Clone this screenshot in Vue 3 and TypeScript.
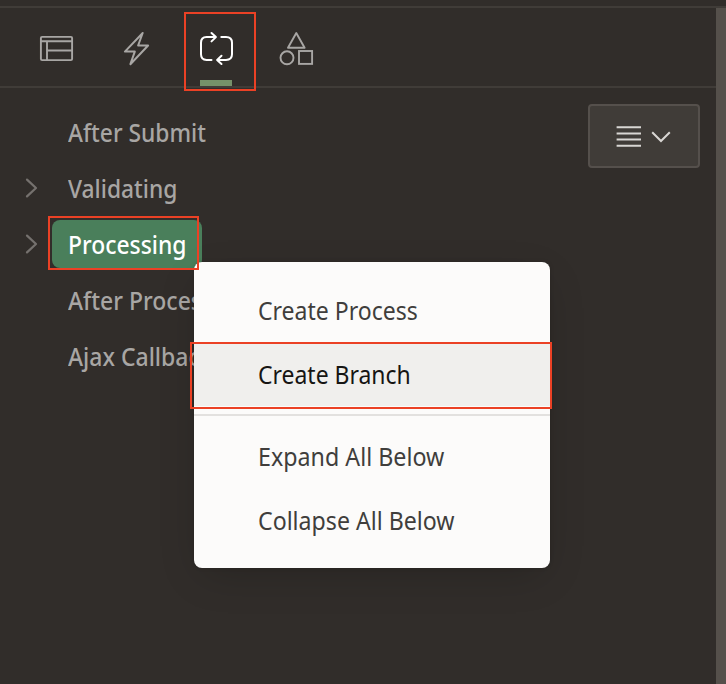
<script setup lang="ts">
interface TreeNode {
  label: string
  expandable: boolean
  selected?: boolean
  scale: number
}

interface MenuEntry {
  label: string
  active?: boolean
  divided?: boolean
  scale: number
}

const nodes: TreeNode[] = [
  { label: 'After Submit', expandable: false, scale: 0.912 },
  { label: 'Validating', expandable: true, scale: 0.912 },
  { label: 'Processing', expandable: true, selected: true, scale: 0.915 },
  { label: 'After Processing', expandable: false, scale: 0.92 },
  { label: 'Ajax Callback', expandable: false, scale: 0.92 },
]

const entries: MenuEntry[] = [
  { label: 'Create Process', scale: 0.921 },
  { label: 'Create Branch', active: true, scale: 0.918 },
  { label: 'Expand All Below', divided: true, scale: 0.93 },
  { label: 'Collapse All Below', scale: 0.926 },
]
</script>

<template>
  <div class="page">
    <div class="top-strip"></div>
    <div class="body">
      <main class="panel">
        <nav class="tabs">
          <button class="tab" aria-label="Rendering">
            <svg width="40" height="40" viewBox="0 0 40 40">
              <g fill="none" stroke="currentColor" stroke-width="1.9">
                <rect x="4.9" y="8.9" width="31.2" height="23.2" rx="1.2" />
                <path d="M5 13.3H36M11 13.3V32M11 22.5H36" />
              </g>
            </svg>
          </button>
          <button class="tab" aria-label="Dynamic Actions">
            <svg width="40" height="40" viewBox="0 0 40 40">
              <path d="M26.7 5L8.9 23.6H18.8L14.4 36.2L32.1 17.5H22.1Z" fill="none" stroke="currentColor" stroke-width="2" stroke-linejoin="round" />
            </svg>
          </button>
          <button class="tab current" aria-label="Processing">
            <svg width="40" height="40" viewBox="0 0 40 40">
              <g fill="none" stroke="currentColor" stroke-width="2" stroke-linecap="round" stroke-linejoin="round">
                <path d="M15.5 31.9H10.5Q5 31.9 5 26.3V14.8Q5 9.1 10.5 9.1H19.7M15.5 5L19.9 9.1L15.5 13.4" />
                <path d="M25.3 9.1H30Q36 9.1 36 14.8V26.3Q36 31.9 30 31.9H21.3M25.5 27.8L21.1 31.9L25.5 36" />
              </g>
            </svg>
          </button>
          <button class="tab" aria-label="Page Shared Components">
            <svg width="40" height="40" viewBox="0 0 40 40">
              <g fill="none" stroke="currentColor" stroke-width="1.9" stroke-linejoin="round">
                <path d="M20.3 5L28.6 19.8H12Z" />
                <circle cx="11" cy="29.8" r="6.5" />
                <rect x="23" y="23" width="13.1" height="12.9" stroke-linejoin="miter" />
              </g>
            </svg>
          </button>
        </nav>
        <div class="content">
          <ul class="tree">
            <li v-for="node in nodes" :key="node.label" class="node">
              <span class="toggle">
                <svg v-if="node.expandable" width="14" height="22" viewBox="0 0 14 22">
                  <path d="M3 2.6L12 11L3 19.4" fill="none" stroke="currentColor" stroke-width="2.2" stroke-linecap="round" stroke-linejoin="round" />
                </svg>
              </span>
              <span class="node-label" :class="{ selected: node.selected }">
                <span class="text" :style="{ transform: `scaleX(${node.scale})` }">{{ node.label }}</span>
              </span>
            </li>
          </ul>
          <button class="list-button" aria-label="View options">
            <svg width="26" height="24" viewBox="0 0 26 24">
              <path d="M.6 2.2H25M.6 8.4H25M.6 14.6H25M.6 20.8H25" fill="none" stroke="currentColor" stroke-width="2" />
            </svg>
            <svg class="chevron" width="20" height="12" viewBox="0 0 20 12">
              <path d="M1.2 1.2L10 10L18.8 1.2" fill="none" stroke="currentColor" stroke-width="2" />
            </svg>
          </button>
        </div>
      </main>
      <div class="splitter"></div>
    </div>

    <div class="menu" role="menu">
      <div v-for="entry in entries" :key="entry.label" class="entry" :class="{ active: entry.active, divided: entry.divided }" role="menuitem">
        <span class="text" :style="{ transform: `scaleX(${entry.scale})` }">{{ entry.label }}</span>
      </div>
    </div>

    <div class="mark mark-tab"></div>
    <div class="mark mark-node"></div>
    <div class="mark mark-entry"></div>
  </div>
</template>

<style>
body {
  margin: 0;
  background: #312d2a;
}
</style>

<style scoped>
.page {
  position: relative;
  display: flex;
  flex-direction: column;
  width: 726px;
  height: 684px;
  overflow: hidden;
  box-sizing: border-box;
  background: #312d2a;
  font-family: "Noto Sans", "Open Sans", sans-serif;
  font-size: 25px;
  color: #a8a6a4;
}
.page * {
  box-sizing: border-box;
}
button {
  margin: 0;
  padding: 0;
  border: 0;
  background: none;
  color: inherit;
  font: inherit;
}
svg {
  display: block;
}
.top-strip {
  height: 8px;
  border-bottom: 2px solid #403c38;
}
.body {
  display: flex;
  flex: 1;
}
.panel {
  flex: 1;
}
.splitter {
  width: 10px;
  background: #55504b;
}
.tabs {
  display: flex;
  height: 80px;
  padding-left: 16px;
  border-bottom: 2px solid #403c38;
}
.tab {
  display: flex;
  flex-direction: column;
  align-items: center;
  width: 80px;
  height: 78px;
  padding-top: 20px;
}
.tab.current {
  color: #fff;
}
.tab.current::after {
  content: "";
  width: 32px;
  height: 6px;
  margin-top: 12px;
  background: #759169;
}
.content {
  display: flex;
  justify-content: space-between;
  align-items: flex-start;
  padding: 16px 16px 0 24px;
}
.tree {
  margin: 0;
  padding: 0;
  list-style: none;
}
.node {
  display: flex;
  align-items: center;
  height: 56px;
}
.toggle {
  width: 28px;
  color: #75716e;
}
.node-label {
  width: 150px;
  height: 48px;
  padding-left: 16px;
  border-radius: 8px;
  line-height: 49px;
  font-weight: 500;
  white-space: nowrap;
}
.node-label.selected {
  background: #4a7f5b;
  color: #fff;
}
.text {
  display: inline-block;
  transform-origin: left center;
}
.list-button {
  display: flex;
  align-items: center;
  justify-content: center;
  gap: 9px;
  width: 112px;
  height: 64px;
  padding: 2px 2px 0 0;
  border: 2px solid #55504c;
  border-radius: 4px;
  background: #403c38;
  color: #d8d6d3;
}
.menu {
  position: absolute;
  left: 194px;
  top: 262px;
  width: 356px;
  height: 306px;
  padding-top: 18px;
  border-radius: 8px;
  background: #fcfbfa;
  color: #403e3c;
  box-shadow: 0 12px 40px -8px rgba(0, 0, 0, 0.2), 0 0 4px rgba(0, 0, 0, 0.15);
}
.entry {
  height: 64px;
  padding-left: 64px;
  line-height: 60px;
  white-space: nowrap;
}
.entry.active {
  height: 62px;
  background: #f0efed;
  color: #161513;
}
.entry.divided {
  height: 76px;
  margin-top: 8px;
  padding-top: 10px;
  border-top: 2px solid #e3e1df;
}
.mark {
  position: absolute;
  border: 2px solid #eb4125;
}
.mark-tab {
  left: 184px;
  top: 12px;
  width: 72px;
  height: 79px;
}
.mark-node {
  left: 48px;
  top: 216px;
  width: 151px;
  height: 54px;
}
.mark-entry {
  left: 190px;
  top: 342px;
  width: 362px;
  height: 67px;
}
</style>
